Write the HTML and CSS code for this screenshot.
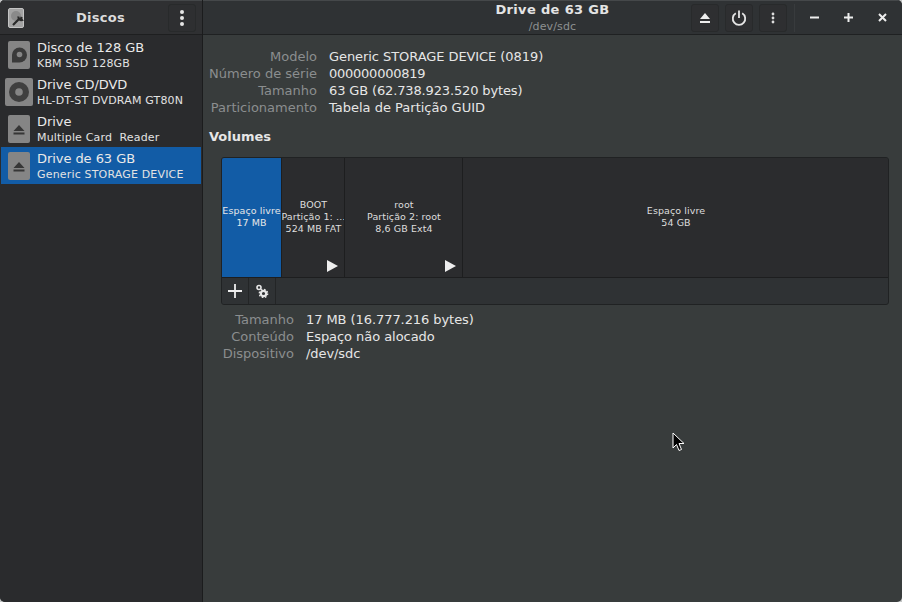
FILE: index.html
```html
<!DOCTYPE html>
<html lang="pt">
<head>
<meta charset="utf-8">
<title>Discos</title>
<link rel="stylesheet" href="styles.css">
</head>
<body>
<div class="window">
  <aside class="sidebar">
    <header class="side-head">
      <svg class="app-icon" width="16" height="20" viewBox="0 0 16 20"><rect x="0.500" y="0.500" width="15" height="19" rx="1.500" fill="#a3a3a3" stroke="#c4c4c4"/><circle cx="8" cy="8" r="5" fill="#8a8a8a"/><path d="M5 17l6-6M10.500 8.500a3 3 0 0 0 3.500 3.500l-1-1.500 .8-1.500" fill="none" stroke="#2a2a2a" stroke-width="2.200"/></svg>
      <h1 class="side-title">Discos</h1>
      <button class="tool side-menu"><svg width="6" height="18" viewBox="0 0 6 18"><circle cx="3" cy="3" r="2" fill="#e6e6e6"/><circle cx="3" cy="9" r="2" fill="#e6e6e6"/><circle cx="3" cy="15" r="2" fill="#e6e6e6"/></svg></button>
    </header>
    <ul class="drives">
      <li class="drive">
        <span class="drive-icon"><svg width="22" height="28" viewBox="0 0 22 28"><rect width="22" height="28" rx="2" fill="#858585"/><path d="M4 14a7.500 7.500 0 1 1 7.500 7.500H4z" fill="#3a3a3a"/><circle cx="11.500" cy="13.500" r="2.800" fill="#858585"/></svg></span>
        <span class="drive-text"><b>Disco de 128 GB</b><small>KBM SSD 128GB</small></span>
      </li>
      <li class="drive">
        <span class="drive-icon"><svg width="28" height="28" viewBox="0 0 28 28"><rect width="28" height="28" rx="2" fill="#858585"/><circle cx="14" cy="14" r="10" fill="#3f3f3f"/><circle cx="14" cy="14" r="3.800" fill="#858585"/></svg></span>
        <span class="drive-text"><b>Drive CD/DVD</b><small>HL-DT-ST DVDRAM GT80N</small></span>
      </li>
      <li class="drive">
        <span class="drive-icon"><svg width="22" height="28" viewBox="0 0 22 28"><rect width="22" height="28" rx="2" fill="#858585"/><path d="M11 10l5.500 6h-11zM5.500 17.500h11v2h-11z" fill="#363636"/></svg></span>
        <span class="drive-text"><b>Drive</b><small>Multiple Card&nbsp; Reader</small></span>
      </li>
      <li class="drive selected">
        <span class="drive-icon"><svg width="22" height="28" viewBox="0 0 22 28"><rect width="22" height="28" rx="2" fill="#858585"/><path d="M11 10l5.500 6h-11zM5.500 17.500h11v2h-11z" fill="#363636"/></svg></span>
        <span class="drive-text"><b>Drive de 63 GB</b><small>Generic STORAGE DEVICE</small></span>
      </li>
    </ul>
  </aside>
  <div class="main">
    <header class="main-head">
      <div class="titles">
        <div class="title">Drive de 63 GB</div>
        <div class="subtitle">/dev/sdc</div>
      </div>
      <div class="actions">
        <button class="tool"><svg width="12" height="12" viewBox="0 0 12 12"><path d="M6 1l5 6H1zM1 9h10v2H1z" fill="#eeeeee"/></svg></button>
        <button class="tool"><svg width="16" height="16" viewBox="0 0 16 16"><path d="M4.800 3.300a6.200 6.200 0 1 0 6.400 0" fill="none" stroke="#e6e6e6" stroke-width="1.800"/><path d="M8 0.500v7.500" stroke="#e6e6e6" stroke-width="1.800"/></svg></button>
        <button class="tool"><svg width="4" height="12" viewBox="0 0 4 12"><circle cx="2" cy="2" r="1.400" fill="#dddddd"/><circle cx="2" cy="6" r="1.400" fill="#dddddd"/><circle cx="2" cy="10" r="1.400" fill="#dddddd"/></svg></button>
      </div>
      <div class="win-controls">
        <svg width="9" height="9" viewBox="0 0 9 9"><path d="M0 4.500h9" stroke="#eeeeee" stroke-width="2"/></svg>
        <svg width="9" height="9" viewBox="0 0 9 9"><path d="M0 4.500h9M4.500 0v9" stroke="#eeeeee" stroke-width="2"/></svg>
        <svg width="9" height="9" viewBox="0 0 9 9"><path d="M1 1l7 7M8 1l-7 7" stroke="#eeeeee" stroke-width="2"/></svg>
      </div>
    </header>
    <section class="content">
      <dl class="info drive-info">
        <dt>Modelo</dt><dd class="tight-a">Generic STORAGE DEVICE (0819)</dd>
        <dt>Número de série</dt><dd class="tight-c">000000000819</dd>
        <dt>Tamanho</dt><dd class="tight-b">63 GB (62.738.923.520 bytes)</dd>
        <dt>Particionamento</dt><dd>Tabela de Partição GUID</dd>
      </dl>
      <h2 class="vol-title">Volumes</h2>
      <div class="volumes">
        <div class="segments">
          <div class="seg seg-free selected-seg"><span>Espaço livre</span><span>17 MB</span></div>
          <div class="seg seg-boot"><span>BOOT</span><span>Partição 1: …</span><span>524 MB FAT</span><i class="play"></i></div>
          <div class="seg seg-root"><span>root</span><span>Partição 2: root</span><span>8,6 GB Ext4</span><i class="play"></i></div>
          <div class="seg seg-rest"><span>Espaço livre</span><span>54 GB</span></div>
        </div>
        <div class="vol-tools">
          <button class="vol-btn plus"><svg width="14" height="14" viewBox="0 0 14 14"><path d="M0 7h14M7 0v14" stroke="#eeeeee" stroke-width="1.800"/></svg></button>
          <button class="vol-btn gear"><svg width="14" height="14" viewBox="0 0 14 14"><circle cx="4" cy="3.500" r="2" fill="none" stroke="#e6e6e6" stroke-width="1.600"/><circle cx="8.500" cy="9.500" r="2.700" fill="none" stroke="#e6e6e6" stroke-width="2.200"/><circle cx="8.500" cy="9.500" r="4.200" fill="none" stroke="#e6e6e6" stroke-width="1.300" stroke-dasharray="1.600 1.700"/></svg></button>
        </div>
      </div>
      <dl class="info vol-info">
        <dt>Tamanho</dt><dd class="tight-a">17 MB (16.777.216 bytes)</dd>
        <dt>Conteúdo</dt><dd class="tight-d">Espaço não alocado</dd>
        <dt>Dispositivo</dt><dd class="tight-a">/dev/sdc</dd>
      </dl>
    </section>
  </div>
  <svg class="cursor" width="13" height="21" viewBox="0 0 13 21"><path d="M1 1v15l3.500-3.500 2.500 6 2.500-1-2.500-6H12z" fill="#000" stroke="#fff"/></svg>
</div>
</body>
</html>
```
FILE: styles.css
```css
* { box-sizing: border-box; }
html, body { margin: 0; padding: 0; background: #c4c6c6; }
body { width: 902px; height: 602px; overflow: hidden; font-family: "DejaVu Sans", sans-serif; font-size: 13px; color: #e8e8e8; }
.window { position: relative; width: 902px; height: 602px; display: flex; border-radius: 5px; overflow: hidden; background: #383c3c; }

.sidebar { width: 203px; flex: none; background: #2a2b2d; border-right: 1px solid #1b1c1d; display: flex; flex-direction: column; }
.side-head { height: 35px; flex: none; display: flex; align-items: center; padding: 0 0 0 8px; background: #2f3032; border-bottom: 1px solid #1e1f20; border-top: 1px solid #45484a; }
.app-icon { flex: none; }
.side-title { flex: 1; margin: 0; padding-left: 9px; text-align: center; font-size: 13px; font-weight: bold; line-height: 17px; letter-spacing: .3px; color: #dcdcdc; }
.side-menu { width: 28px; height: 28px; margin-right: 6px; }

.tool { width: 28px; height: 28px; padding: 0; display: flex; align-items: center; justify-content: center; background: #2e2f31; border: 1px solid #282a2b; border-radius: 3px; }

.drives { list-style: none; margin: 0; padding: 1px 1px 0; }
.drive { height: 37px; display: flex; align-items: center; }
.drive.selected { background: #125ca6; }
.drive-icon { width: 36px; flex: none; display: flex; justify-content: center; }
.drive-icon svg { display: block; }
.drive-text { display: flex; flex-direction: column; white-space: nowrap; padding-top: 2px; }
.drive-text b { font-weight: normal; font-size: 13px; line-height: 15px; letter-spacing: -.06px; color: #e9e9e9; }
.drive-text small { margin-top: 1px; font-size: 11px; line-height: 16px; letter-spacing: .17px; color: #e2e2e2; }

.main { flex: 1; min-width: 0; display: flex; flex-direction: column; }
.main-head { height: 35px; flex: none; display: flex; align-items: center; background: #2f3234; border-top: 1px solid #45484a; border-bottom: 1px solid #1f2122; }
.titles { width: 487px; flex: none; padding: 1px 0 0 212px; text-align: center; }
.title { font-size: 13px; font-weight: bold; line-height: 15px; letter-spacing: .35px; color: #e4e4e4; white-space: nowrap; }
.subtitle { font-size: 11px; line-height: 15px; padding-top: 2px; letter-spacing: .15px; color: #8d9091; }
.actions { display: flex; gap: 6px; padding-right: 7px; margin-left: 1px; border-right: 1px solid #383b3d; }
.win-controls { display: flex; gap: 25px; padding-left: 15px; align-items: center; }

.content { flex: 1; padding: 13px 13px 0 6px; }
.info { margin: 0; display: grid; grid-template-columns: auto 1fr; column-gap: 12px; line-height: 17px; }
.info dt { text-align: right; color: #8b8e8f; white-space: nowrap; }
.info dd { margin: 0; color: #e6e6e6; white-space: nowrap; }
.tight-a { letter-spacing: -.07px; }
.tight-b { letter-spacing: -.14px; }
.tight-c { letter-spacing: -.25px; }
.tight-d { letter-spacing: -.05px; }
.drive-info { grid-template-columns: 108px 1fr; }
.vol-title { margin: 12px 0 12px; font-size: 13px; font-weight: bold; line-height: 17px; color: #e6e6e6; }

.volumes { margin-left: 12px; height: 148px; background: #2f3234; border: 1px solid #202223; border-radius: 3px; display: flex; flex-direction: column; overflow: hidden; }
.segments { height: 120px; flex: none; display: flex; background: #2b2c2e; border-bottom: 1px solid #1d1e1f; }
.seg { position: relative; flex: none; display: flex; flex-direction: column; align-items: center; justify-content: center; font-size: 9.500px; line-height: 12px; letter-spacing: .08px; color: #dedede; border-right: 1px solid #1d1e1f; white-space: nowrap; overflow: hidden; padding: 0 0 2px 1px; }
.selected-seg { background: #125ca6; color: #e6e6e6; padding-left: 0; }
.seg-free { width: 60px; }
.seg-boot { width: 63px; }
.seg-root { width: 118px; }
.seg-rest { flex: 1; border-right: 0; }
.play { position: absolute; right: 6px; bottom: 5px; width: 0; height: 0; border-left: 11px solid #eeeeee; border-top: 6px solid transparent; border-bottom: 6px solid transparent; }

.vol-tools { flex: 1; display: flex; }
.vol-btn { width: 27px; padding: 0; display: flex; align-items: center; justify-content: center; background: #2f3234; border: 0; border-right: 1px solid #232526; }

.vol-info { grid-template-columns: 72px 1fr; margin: 6px 0 0 13px; column-gap: 12px; }

.cursor { position: absolute; left: 672px; top: 432px; }
```
